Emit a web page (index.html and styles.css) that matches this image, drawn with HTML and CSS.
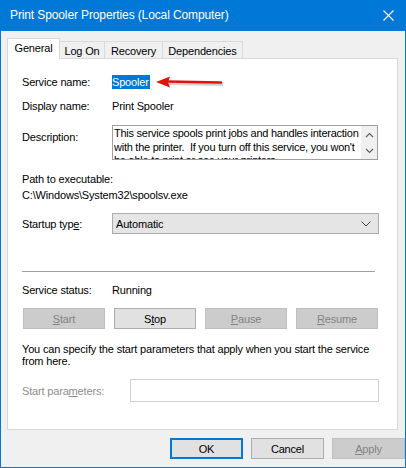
FILE: index.html
```html
<!DOCTYPE html>
<html lang="en">
<head>
  <meta charset="UTF-8" />
  <title>Print Spooler Properties (Local Computer)</title>
  <link rel="stylesheet" href="styles.css">
</head>
<body>
  <div class="window">
    <div class="titlebar">
      <span class="title">Print Spooler Properties (Local Computer)</span>
      <svg class="close" width="11" height="11" viewBox="0 0 11 11">
        <path d="M0.5 0.5 L10.5 10.5 M10.5 0.5 L0.5 10.5" stroke="#fff" stroke-width="1.2"/>
      </svg>
    </div>

    <div class="dialog">
      <div class="tabs">
        <div class="tab active">General</div>
        <div class="tab">Log On</div>
        <div class="tab">Recovery</div>
        <div class="tab">Dependencies</div>
      </div>

      <div class="panel">
        <div class="row row-name">
          <span class="label">Service name:</span>
          <span class="value">
            <span class="selected">Spooler</span>
            <svg class="arrow" width="70" height="14" viewBox="0 0 70 14">
              <path d="M14 8.5 L68 9.5" stroke="rgba(0,0,0,0.18)" stroke-width="3"/>
              <path d="M12 6.5 L66 7.5" stroke="#e3120b" stroke-width="2.6" stroke-linecap="round"/>
              <path d="M1 7 L15 1.5 L13 7 L15 12.5 Z" fill="#e3120b"/>
            </svg>
          </span>
        </div>

        <div class="row row-display">
          <span class="label">Display name:</span>
          <span class="value">Print Spooler</span>
        </div>

        <div class="row row-desc">
          <span class="label">Description:</span>
          <div class="desc-box">
            <div class="desc-text">This service spools print jobs and handles interaction with the printer.&nbsp; If you turn off this service, you won't be able to print or see your printers.</div>
            <div class="scrollbar">
              <svg width="9" height="6" viewBox="0 0 9 6"><path d="M1 5 L4.5 1.5 L8 5" fill="none" stroke="#606060" stroke-width="1.2"/></svg>
              <svg width="9" height="6" viewBox="0 0 9 6"><path d="M1 1 L4.5 4.5 L8 1" fill="none" stroke="#606060" stroke-width="1.2"/></svg>
            </div>
          </div>
        </div>

        <div class="path">
          <div>Path to executable:</div>
          <div>C:\Windows\System32\spoolsv.exe</div>
        </div>

        <div class="row row-startup">
          <span class="label">Startup typ<u>e</u>:</span>
          <div class="combo">
            <span>Automatic</span>
            <svg width="10" height="6" viewBox="0 0 10 6"><path d="M0.5 0.5 L5 5 L9.5 0.5" fill="none" stroke="#404040" stroke-width="1"/></svg>
          </div>
        </div>

        <div class="separator"></div>

        <div class="row row-status">
          <span class="label">Service status:</span>
          <span class="value">Running</span>
        </div>

        <div class="service-buttons">
          <button class="btn" disabled><u>S</u>tart</button>
          <button class="btn">S<u>t</u>op</button>
          <button class="btn" disabled><u>P</u>ause</button>
          <button class="btn" disabled><u>R</u>esume</button>
        </div>

        <p class="hint">You can specify the start parameters that apply when you start the service from here.</p>

        <div class="row row-params">
          <span class="label disabled">Start para<u>m</u>eters:</span>
          <div class="params-box"></div>
        </div>
      </div>

      <div class="actions">
        <button class="btn default">OK</button>
        <button class="btn">Cancel</button>
        <button class="btn" disabled><u>A</u>pply</button>
      </div>
    </div>
  </div>
</body>
</html>
```

FILE: styles.css
```css
* { box-sizing: border-box; margin: 0; padding: 0; }
html, body {
  width: 406px; height: 468px;
  overflow: hidden;
  background: #f0f0f0;
}
body {
  font-family: "Liberation Sans", Arial, sans-serif;
  font-size: 11px;
  letter-spacing: -0.17px;
  color: #000;
}

.window {
  width: 406px; height: 468px;
  border: 1px solid #0078d7;
  border-top: none;
  background: #f0f0f0;
}

.titlebar {
  height: 31px;
  background: #0078d7;
  color: #fff;
  display: flex; align-items: center; justify-content: space-between;
  padding: 0 11px 1px 9px;
}
.title {
  font-family: "Liberation Sans", Arial, sans-serif;
  font-size: 12px;
  letter-spacing: -0.12px;
}

.dialog { padding: 7px 0 0 6px; }

/* tabs */
.tabs {
  display: flex; align-items: flex-end;
  height: 20px;
  position: relative; z-index: 1;
}
.tab {
  height: 17px;
  padding: 0 2px;
  border: 1px solid #d9d9d9;
  border-bottom: none;
  margin-left: -1px;
  white-space: nowrap;
  display: flex; align-items: center; justify-content: center;
}
.tab.active {
  height: 21px;
  margin-bottom: -1px;
  margin-left: 0;
  background: #fff;
  padding-bottom: 3px;
  position: relative; z-index: 2;
}
.tab:nth-child(2) { width: 46px; padding-top: 1px; }
.tab:nth-child(3) { width: 59px; padding-top: 1px; }
.tab:nth-child(4) { width: 81px; padding-top: 1px; }
.tab.active { width: 53px; }

.panel {
  width: 391px; height: 372px;
  background: #fff;
  border: 1px solid #d9d9d9;
  padding: 0 0 0 14px;
}

.row { display: flex; align-items: center; }
.label { width: 90px; flex: none; }
.label.disabled { color: #8d8d8d; width: 108px; }
.value { display: flex; align-items: center; }

.row-name { height: 14px; margin-top: 16px; }
.selected {
  background: #0078d7; color: #fff;
  line-height: 14px; padding: 0 1px 0 0;
}
.arrow { margin-left: 5px; }

.row-display { height: 14px; margin-top: 10px; }

.row-desc { align-items: flex-start; margin-top: 12px; }
.row-desc .label { margin-top: 5px; line-height: 14px; }
.desc-box {
  width: 266px; height: 35px;
  border: 1px solid #a0a0a0;
  display: flex;
  overflow: hidden;
}
.desc-text {
  flex: 1;
  padding: 1px 0 0 1px;
  line-height: 13.5px;
  letter-spacing: -0.25px;
  overflow: hidden;
}
.scrollbar {
  width: 16px;
  background: #f0f0f0;
  display: flex; flex-direction: column; align-items: center;
  padding-top: 6px; gap: 10px;
}

.path { margin-top: 11px; line-height: 16px; }

.row-startup { margin-top: 10px; }
.combo {
  width: 267px; height: 21px;
  background: #e5e5e5;
  border: 1px solid #acacac;
  display: flex; align-items: center; justify-content: space-between;
  padding: 0 7px 0 3px;
}

.separator {
  width: 353px; height: 1px;
  background: #a0a0a0;
  margin-top: 37px;
}

.row-status { height: 14px; margin-top: 11px; }

.btn {
  font-family: inherit; font-size: 11px; color: #000;
  letter-spacing: inherit;
  height: 21px;
  background: #e1e1e1;
  border: 1px solid #adadad;
}
.btn:disabled {
  background: #cccccc;
  border-color: #bfbfbf;
  color: #838383;
}
.btn.default { border: 2px solid #0078d7; }

.service-buttons {
  display: grid;
  grid-template-columns: repeat(4, 1fr);
  gap: 9px;
  width: 355px;
  margin: 11px 0 0 1px;
}

.hint { margin-top: 14px; line-height: 12px; width: 360px; }

.row-params { margin-top: 12px; }
.params-box {
  width: 249px; height: 23px;
  border: 1px solid #d0d0d0;
}

.actions {
  display: flex; gap: 8px;
  justify-content: flex-end;
  width: 398px;
  margin-top: 8px;
}
.actions .btn { width: 73px; }
```
